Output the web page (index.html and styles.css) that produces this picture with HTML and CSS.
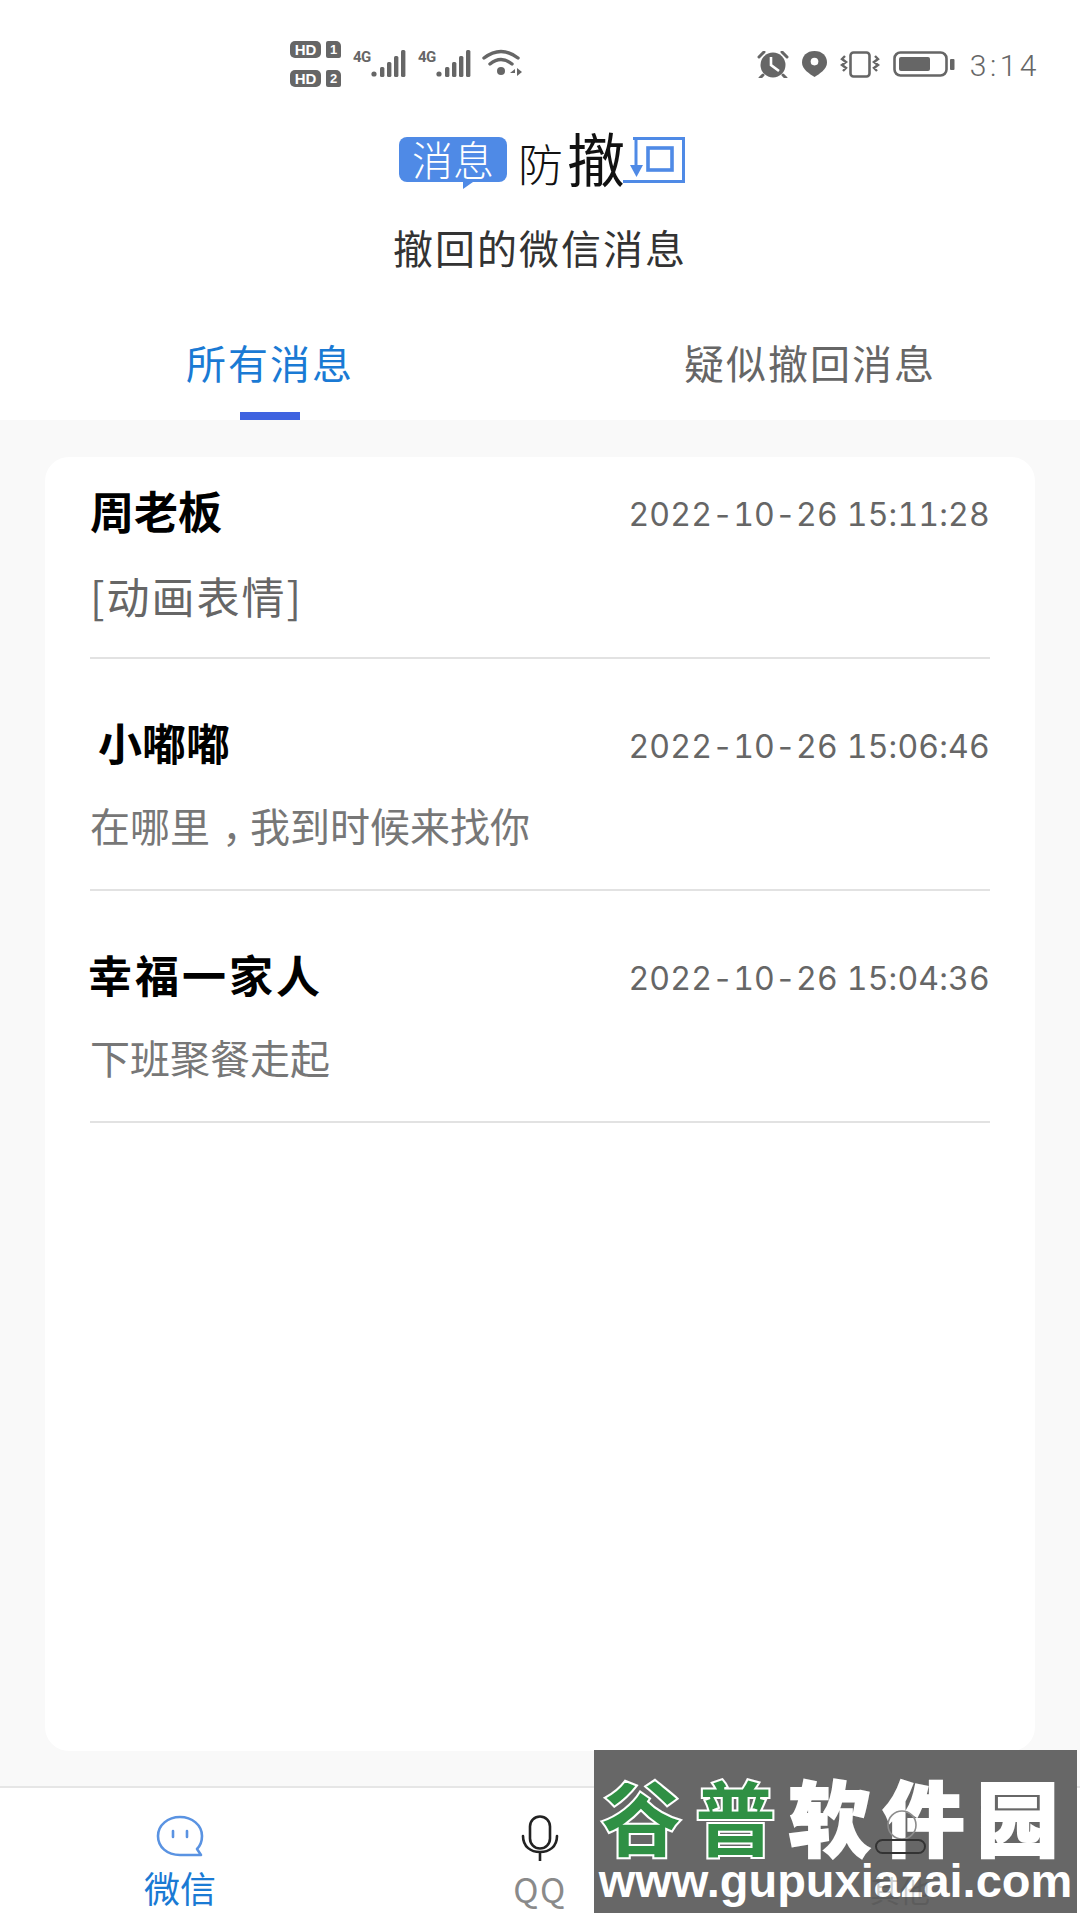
FILE: index.html
```html
<!DOCTYPE html>
<html lang="zh-CN">
<head>
    <meta charset="UTF-8">
    <meta name="viewport" content="width=device-width, initial-scale=1.0">
    <title>消息防撤回</title>
    <link rel="stylesheet" href="styles.css">
</head>
<body>
    <div class="statusbar">
        <div class="status-left">
            <div class="sims">
                <div class="sim"><span class="hd">HD</span><span class="slot">1</span></div>
                <div class="sim"><span class="hd">HD</span><span class="slot">2</span></div>
            </div>
            <div class="signal">
                <span class="net">4G</span>
                <svg width="35" height="27" viewBox="0 0 35 27"><g fill="#666"><circle cx="3" cy="24" r="2.6"/><rect x="9" y="17" width="4.4" height="10" rx="1.5"/><rect x="16" y="12" width="4.4" height="15" rx="1.5"/><rect x="23" y="6" width="4.4" height="21" rx="1.5"/><rect x="30" y="0" width="4.4" height="27" rx="1.5"/></g></svg>
            </div>
            <div class="signal">
                <span class="net">4G</span>
                <svg width="35" height="27" viewBox="0 0 35 27"><g fill="#666"><circle cx="3" cy="24" r="2.6"/><rect x="9" y="17" width="4.4" height="10" rx="1.5"/><rect x="16" y="12" width="4.4" height="15" rx="1.5"/><rect x="23" y="6" width="4.4" height="21" rx="1.5"/><rect x="30" y="0" width="4.4" height="27" rx="1.5"/></g></svg>
            </div>
            <svg class="wifi" width="42" height="28" viewBox="0 0 42 28"><g fill="none" stroke="#666" stroke-width="3.4" stroke-linecap="round"><path d="M2 9 Q19 -4 36 9"/><path d="M8 15 Q19 6 30 15"/></g><circle cx="19" cy="22" r="4" fill="#666"/><path d="M33 20 l-5 4 h5z M35 19 l5 4 -5 4z" fill="#666"/></svg>
        </div>
        <div class="status-right">
            <svg width="32" height="27" viewBox="0 0 32 27"><circle cx="16" cy="14" r="12.5" fill="#666"/><path d="M2 6 L7 1 M30 6 L25 1 M6 24 L3 27 M26 24 L29 27" stroke="#666" stroke-width="3" stroke-linecap="round"/><path d="M14 6 V14 L22 20" fill="none" stroke="#fff" stroke-width="2.6"/></svg>
            <svg width="25" height="26" viewBox="0 0 26 27"><path d="M13 0 C21 0 26 5 26 12 C26 19 18 24 13 27 C8 24 0 19 0 12 C0 5 5 0 13 0Z" fill="#666"/><circle cx="13" cy="11" r="4" fill="#fff"/></svg>
            <svg width="40" height="27" viewBox="0 0 40 27"><rect x="10.5" y="1.5" width="19" height="24" rx="3" fill="none" stroke="#666" stroke-width="2.6"/><path d="M5 5 l-3 3 l4 3 l-4 3 l4 3 l-3 3 M35 5 l3 3 l-4 3 l4 3 l-4 3 l3 3" fill="none" stroke="#666" stroke-width="2.4"/></svg>
            <svg width="62" height="26" viewBox="0 0 62 26"><rect x="1.5" y="1.5" width="52" height="23" rx="6" fill="none" stroke="#666" stroke-width="2.6"/><rect x="6" y="6" width="31" height="14" rx="2" fill="#666"/><rect x="57" y="8" width="4.5" height="11" rx="1" fill="#666"/></svg>
            <span class="clock">3:14</span>
        </div>
    </div>

    <div class="logo">
        <span class="logo-bubble">消息</span>
        <span class="logo-fang">防</span>
        <span class="logo-che">撤</span>
        <svg class="logo-hui" width="66" height="46" viewBox="0 0 66 46"><g fill="none" stroke="#4f8ae6" stroke-width="3"><path d="M14 1.5 H64.5 V44.5 H4"/><rect x="29" y="11" width="24" height="22" stroke-width="3.6"/><path d="M17 1.5 V34"/></g><path d="M11 28 H24 L17.5 40Z" fill="#4f8ae6"/></svg>
    </div>
    <h1 class="title">撤回的微信消息</h1>

    <div class="tabs">
        <div class="tab active">所有消息</div>
        <div class="tab">疑似撤回消息</div>
    </div>

    <main class="content">
        <div class="card">
            <div class="msg">
                <div class="msg-top">
                    <span class="name">周老板</span>
                    <span class="time">2022-10-26 15:11:28</span>
                </div>
                <p class="text text-first">[动画表情]</p>
            </div>
            <div class="msg">
                <div class="msg-top">
                    <span class="name name-indent">小嘟嘟</span>
                    <span class="time">2022-10-26 15:06:46</span>
                </div>
                <p class="text">在哪里<span class="comma">，</span>我到时候来找你</p>
            </div>
            <div class="msg">
                <div class="msg-top">
                    <span class="name name-wide">幸福一家人</span>
                    <span class="time">2022-10-26 15:04:36</span>
                </div>
                <p class="text">下班聚餐走起</p>
            </div>
        </div>
    </main>

    <nav class="bottom-nav">
        <div class="nav-item active">
            <svg width="50" height="44" viewBox="3 0 48 44"><path d="M27 2 C39 2 49 10 49 21 C49 27 47 31 44 34 L48 40 H27 C14 40 5 32 5 21 C5 10 15 2 27 2Z" fill="none" stroke="#5a93e2" stroke-width="2.6" stroke-linejoin="round"/><path d="M20 16 V22 M34 16 V22" stroke="#5a93e2" stroke-width="2.6" stroke-linecap="round"/></svg>
            <span>微信</span>
        </div>
        <div class="nav-item">
            <svg width="40" height="46" viewBox="0 0 40 46"><rect x="10" y="1.5" width="20" height="32" rx="10" fill="none" stroke="#222" stroke-width="2.6"/><path d="M3 21 C3 32 11 37 20 37 C29 37 37 32 37 21 M20 37 V46" fill="none" stroke="#222" stroke-width="2.6" stroke-linecap="round"/></svg>
            <span class="nav-qq">QQ</span>
        </div>
        <div class="nav-item nav-over">
            <svg class="nav-ghost" width="52" height="46" viewBox="0 0 52 46"><circle cx="28" cy="10" r="14" fill="none" stroke="#8c8c8c" stroke-width="1.6"/><rect x="2" y="25" width="49" height="13" rx="6.5" fill="none" stroke="#333" stroke-width="2"/></svg>
            <span class="nav-faint">其他</span>
        </div>
    </nav>

    <div class="watermark">
        <div class="wm-title"><span class="wm-green">谷普</span>软件园</div>
        <div class="wm-url">www.gupuxiazai.com</div>
    </div>
</body>
</html>
```

FILE: styles.css
```css
body {
    margin: 0;
    width: 1080px;
    height: 1920px;
    display: flex;
    flex-direction: column;
    position: relative;
    overflow: hidden;
    background-color: white;
    font-family: "Noto Sans CJK SC", "Noto Sans", sans-serif;
}
.statusbar {
    height: 135px;
    flex: none;
    box-sizing: border-box;
    padding: 41px 40px 0 290px;
    display: flex;
    justify-content: space-between;
    align-items: flex-start;
}
.status-left {
    display: flex;
    align-items: flex-start;
    gap: 12px;
}
.status-right {
    display: flex;
    align-items: center;
    gap: 13px;
    height: 48px;
    margin-top: -1px;
}
.sims {
    display: flex;
    flex-direction: column;
    gap: 12px;
}
.sim {
    display: flex;
    gap: 5px;
    height: 17px;
}
.hd {
    width: 31px;
    border-radius: 5px;
    background-color: #666;
    color: white;
    font: bold 15px/17px "Liberation Sans", sans-serif;
    text-align: center;
}
.slot {
    width: 15px;
    border-radius: 2px 5px 2px 2px;
    background-color: #666;
    color: white;
    font: bold 13px/17px "Liberation Sans", sans-serif;
    text-align: center;
}
.signal {
    display: flex;
    align-items: flex-start;
    margin-top: 9px;
}
.net {
    color: #666;
    font: bold 15px/14px "Roboto", sans-serif;
    letter-spacing: -0.5px;
    width: 18px;
    white-space: nowrap;
}
.wifi {
    margin-top: 8px;
    margin-left: -1px;
}
.clock {
    color: #666;
    font: 300 30px/48px "Roboto", sans-serif;
    letter-spacing: 3.5px;
    margin-left: 2px;
    margin-top: 3px;
}

.logo {
    height: 50px;
    flex: none;
    display: flex;
    justify-content: center;
    align-items: center;
    padding-left: 4px;
}
.logo-bubble {
    width: 108px;
    height: 45px;
    margin-top: -2px;
    border-radius: 8px;
    background-color: #4f8ae6;
    color: white;
    font-size: 41px;
    line-height: 43px;
    font-weight: 300;
    text-align: center;
    margin-right: 11px;
    position: relative;
}
.logo-bubble::after {
    content: "";
    position: absolute;
    left: 64px;
    bottom: -7px;
    border-top: 7px solid #4f8ae6;
    border-right: 10px solid transparent;
}
.logo-fang {
    font-size: 45px;
    line-height: 50px;
    margin-top: 6px;
    font-weight: 300;
    color: #111;
}
.logo-che {
    font-size: 58px;
    color: #111;
    line-height: 50px;
    margin-left: 4px;
    margin-right: -6px;
    margin-bottom: 6px;
}
.title {
    margin: 38px 0 0;
    color: #333;
    font-size: 40px;
    line-height: 48px;
    font-weight: 400;
    letter-spacing: 2px;
    text-align: center;
}

.tabs {
    flex: none;
    height: 149px;
    display: flex;
}
.tab {
    flex: 1;
    box-sizing: border-box;
    padding-top: 66px;
    color: #666;
    font-size: 40px;
    line-height: 50px;
    letter-spacing: 2px;
    text-align: center;
    position: relative;
}
.tab.active {
    color: #1a7ad4;
}
.tab.active::after {
    content: "";
    position: absolute;
    left: 240px;
    bottom: 0;
    width: 60px;
    height: 8px;
    background-color: #3f63e0;
}

.content {
    flex: 1;
    box-sizing: border-box;
    padding: 37px 45px 35px;
    background-color: #f9f9f9;
    display: flex;
}
.card {
    flex: 1;
    box-sizing: border-box;
    padding: 0 45px;
    background-color: white;
    border-radius: 24px;
}
.msg {
    height: 232px;
    box-sizing: border-box;
    border-bottom: 2px solid #e2e2e2;
}
.msg:first-child {
    height: 202px;
}
.msg-top {
    display: flex;
    justify-content: space-between;
    align-items: center;
    padding-top: 26px;
    height: 62px;
}
.msg + .msg .msg-top {
    padding-top: 56px;
}
.name {
    color: black;
    font-size: 44px;
    line-height: 62px;
    font-weight: 700;
    margin-bottom: 8px;
}
.name-indent {
    margin-left: 8px;
}
.name-wide {
    letter-spacing: 3px;
    margin-left: -2px;
}
.time {
    color: #666;
    font-family: Inter, sans-serif;
    font-size: 32px;
    font-variant-numeric: tabular-nums;
    letter-spacing: 0.2px;
    white-space: nowrap;
}
.text {
    margin: 23px 0 0;
    color: #777;
    font-size: 40px;
    line-height: 50px;
}
.text-first {
    margin-top: 25px;
    color: #666;
    font-size: 43px;
    letter-spacing: 2px;
}
.comma {
    margin-left: 12px;
    letter-spacing: -12px;
}

.bottom-nav {
    flex: none;
    height: 134px;
    box-sizing: border-box;
    border-top: 2px solid #e6e6e6;
    display: flex;
    background-color: white;
}
.nav-item {
    flex: 1;
    display: flex;
    flex-direction: column;
    align-items: center;
    padding-top: 27px;
    color: #8a8a8a;
    font-size: 36px;
    line-height: 44px;
}
.nav-item span {
    margin-top: 6px;
}
.nav-item.active {
    color: #1a7ad4;
}
.nav-qq {
    font-size: 34px;
    letter-spacing: 1.5px;
}
.nav-over {
    position: relative;
    z-index: 1;
}
.nav-ghost {
    overflow: visible;
}
.nav-faint {
    color: rgba(60, 60, 60, 0.25);
    font-size: 30px;
}

.watermark {
    position: absolute;
    left: 594px;
    top: 1750px;
    width: 483px;
    height: 163px;
    box-sizing: border-box;
    padding: 24px 3px 0;
    background-color: #676767;
    overflow: hidden;
    color: white;
    text-align: center;
}
.wm-title {
    font-size: 82px;
    line-height: 82px;
    font-weight: 900;
    letter-spacing: 12px;
    white-space: nowrap;
    -webkit-text-stroke: 2px white;
}
.wm-green {
    color: #2f9044;
}
.wm-url {
    font-family: "Liberation Sans", sans-serif;
    font-size: 47px;
    line-height: 50px;
    font-weight: 700;
    white-space: nowrap;
}
```
